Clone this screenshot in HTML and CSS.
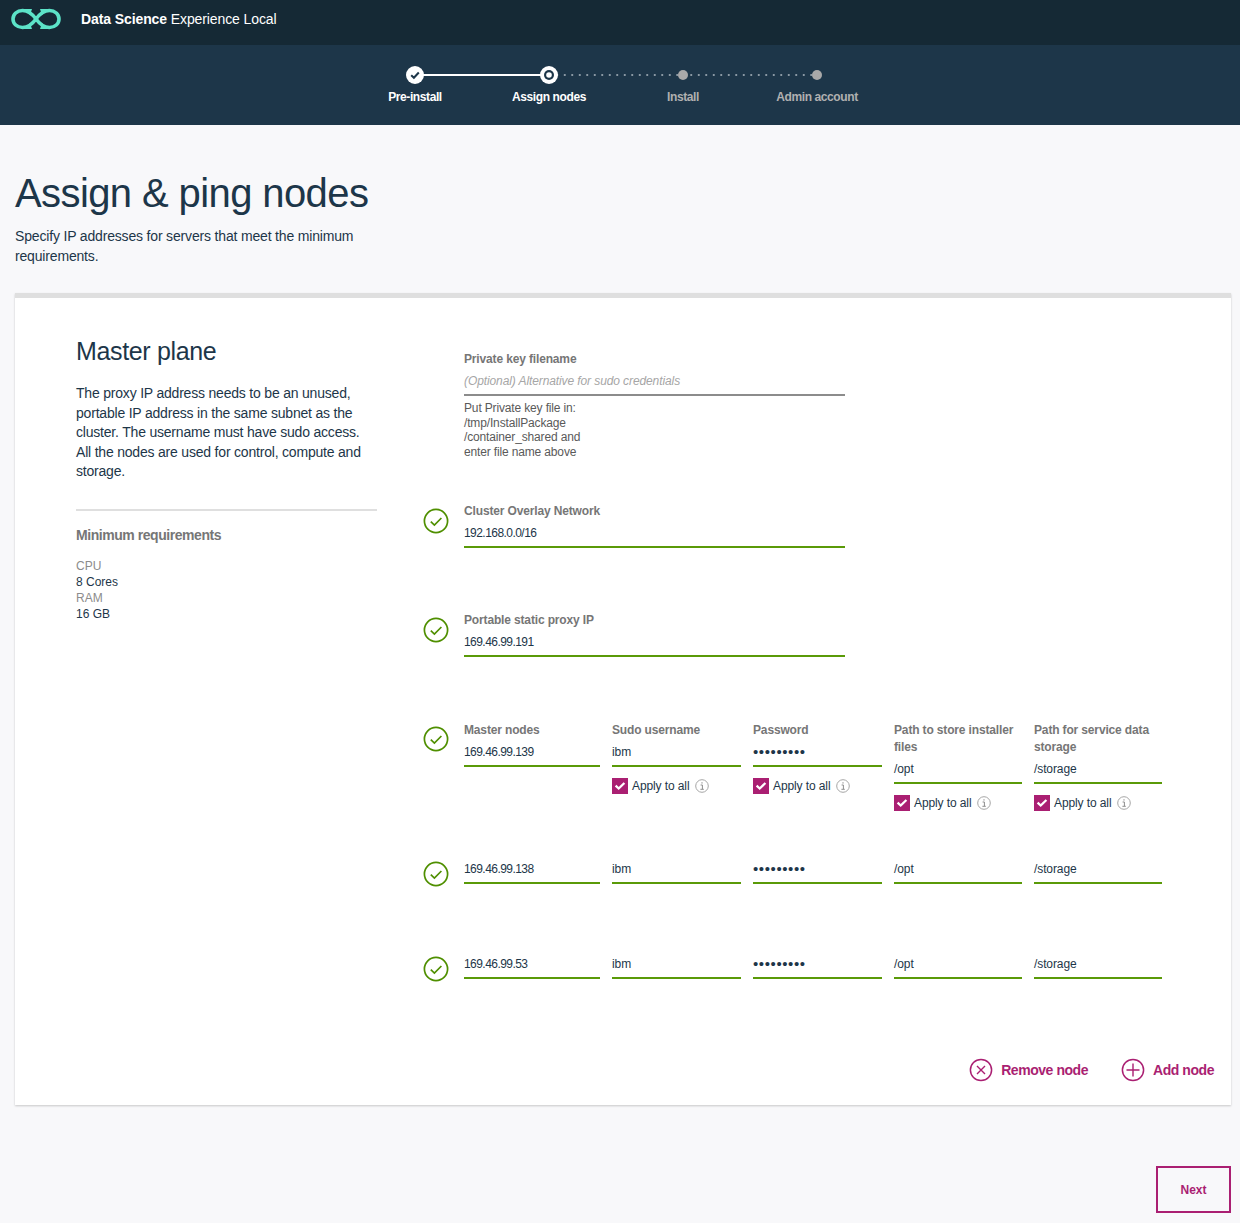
FILE: index.html
```html
<!DOCTYPE html>
<html lang="en">
<head>
  <meta charset="UTF-8">
  <title>Data Science Experience Local</title>
  <link rel="stylesheet" href="styles.css">
</head>
<body>
  <svg class="defs" width="0" height="0">
    <symbol id="ok" viewBox="0 0 26 26">
      <circle cx="13" cy="13" r="11.6" fill="none" stroke="#4f8f00" stroke-width="1.7"/>
      <path d="M7.8 13.6l3.6 3.4L18.400 10" fill="none" stroke="#4f8f00" stroke-width="1.7"/>
    </symbol>
    <symbol id="check" viewBox="0 0 16 16">
      <rect width="16" height="16" fill="#aa1f72"/>
      <path d="M3.600 7.600l3.100 2.900L12.400 5" fill="none" stroke="#fff" stroke-width="2.300"/>
    </symbol>
    <symbol id="info" viewBox="0 0 14 14">
      <circle cx="7" cy="7" r="6.300" fill="none" stroke="#a6a6a6"/>
      <path d="M5.600 6h1.800v4M5.400 10.300h3.400M7 3.200v1.400" fill="none" stroke="#8c8c8c"/>
    </symbol>
  </svg>

  <header class="topbar">
    <svg class="logo" width="50" height="22" viewBox="0 0 50 22">
      <path d="M25 11C21 5.500 17 2.500 11.500 2.500 6 2.500 2 6.300 2 11S6 19.500 11.500 19.500C17 19.500 21 16.500 25 11 29 5.500 33 2.500 38.500 2.500 44 2.500 48 6.300 48 11S44 19.500 38.500 19.500C33 19.500 29 16.500 25 11Z" fill="none" stroke="#5ce3c8" stroke-width="3.600"/>
      <path d="M13 1h8l-2 6zM37 1h-8l2 6zM13 21h8l-2-6zM37 21h-8l2-6z" fill="#5ce3c8"/>
    </svg>
    <div class="brand"><b>Data Science</b> Experience Local</div>
  </header>

  <nav class="stepper">
    <div class="step done">
      <span class="dot"><svg width="18" height="18" viewBox="0 0 18 18"><circle cx="9" cy="9" r="9" fill="#fff"/><path d="M5.200 9.200l2.700 2.600 4.900-5.300" fill="none" stroke="#1d3649" stroke-width="2"/></svg></span>
      <span class="step-name">Pre-install</span>
    </div>
    <div class="step current">
      <span class="dot"><svg width="18" height="18" viewBox="0 0 18 18"><circle cx="9" cy="9" r="9" fill="#fff"/><circle cx="9" cy="9" r="5" fill="#1d3649"/><circle cx="9" cy="9" r="2.800" fill="#fff"/></svg></span>
      <span class="step-name">Assign nodes</span>
    </div>
    <div class="step todo">
      <span class="dot"><i></i></span>
      <span class="step-name">Install</span>
    </div>
    <div class="step todo">
      <span class="dot"><i></i></span>
      <span class="step-name">Admin account</span>
    </div>
  </nav>

  <main class="content">
    <h1>Assign &amp; ping nodes</h1>
    <p class="intro">Specify IP addresses for servers that meet the minimum requirements.</p>

    <section class="card">
      <div class="card-body">
        <aside class="side">
          <h2>Master plane</h2>
          <p class="side-text">The proxy IP address needs to be an unused, portable IP address in the same subnet as the cluster. The username must have sudo access. All the nodes are used for control, compute and storage.</p>
          <h3>Minimum requirements</h3>
          <dl class="reqs">
            <dt>CPU</dt><dd>8 Cores</dd>
            <dt>RAM</dt><dd>16 GB</dd>
          </dl>
        </aside>

        <div class="form">
          <div class="row row-key">
            <span class="status"></span>
            <div class="field wide">
              <label>Private key filename</label>
              <div class="input empty"><em>(Optional) Alternative for sudo credentials</em></div>
              <p class="hint">Put Private key file in:<br>/tmp/InstallPackage<br>/container_shared and<br>enter file name above</p>
            </div>
          </div>

          <div class="row row-net">
            <svg class="status"><use href="#ok"/></svg>
            <div class="field wide">
              <label>Cluster Overlay Network</label>
              <div class="input ip">192.168.0.0/16</div>
            </div>
          </div>

          <div class="row row-net">
            <svg class="status"><use href="#ok"/></svg>
            <div class="field wide">
              <label>Portable static proxy IP</label>
              <div class="input ip">169.46.99.191</div>
            </div>
          </div>

          <div class="row row-master">
            <svg class="status"><use href="#ok"/></svg>
            <div class="nodes">
              <div class="field">
                <label>Master nodes</label>
                <div class="input ip">169.46.99.139</div>
              </div>
              <div class="field">
                <label>Sudo username</label>
                <div class="input">ibm</div>
                <div class="apply"><svg class="box"><use href="#check"/></svg>Apply to all<svg class="info"><use href="#info"/></svg></div>
              </div>
              <div class="field">
                <label>Password</label>
                <div class="input secret">•••••••••</div>
                <div class="apply"><svg class="box"><use href="#check"/></svg>Apply to all<svg class="info"><use href="#info"/></svg></div>
              </div>
              <div class="field">
                <label>Path to store installer files</label>
                <div class="input">/opt</div>
                <div class="apply"><svg class="box"><use href="#check"/></svg>Apply to all<svg class="info"><use href="#info"/></svg></div>
              </div>
              <div class="field">
                <label>Path for service data storage</label>
                <div class="input">/storage</div>
                <div class="apply"><svg class="box"><use href="#check"/></svg>Apply to all<svg class="info"><use href="#info"/></svg></div>
              </div>
            </div>
          </div>

          <div class="row row-node">
            <svg class="status"><use href="#ok"/></svg>
            <div class="nodes">
              <div class="input ip">169.46.99.138</div>
              <div class="input">ibm</div>
              <div class="input secret">•••••••••</div>
              <div class="input">/opt</div>
              <div class="input">/storage</div>
            </div>
          </div>

          <div class="row row-node">
            <svg class="status"><use href="#ok"/></svg>
            <div class="nodes">
              <div class="input ip">169.46.99.53</div>
              <div class="input">ibm</div>
              <div class="input secret">•••••••••</div>
              <div class="input">/opt</div>
              <div class="input">/storage</div>
            </div>
          </div>
        </div>
      </div>

      <div class="node-actions">
        <a class="action">
          <svg width="24" height="24" viewBox="0 0 24 24"><circle cx="12" cy="12" r="10.600" fill="none" stroke="#aa1f72" stroke-width="1.500"/><path d="M8 8l8 8M16 8l-8 8" fill="none" stroke="#aa1f72" stroke-width="1.400"/></svg>
          Remove node
        </a>
        <a class="action">
          <svg width="24" height="24" viewBox="0 0 24 24"><circle cx="12" cy="12" r="10.600" fill="none" stroke="#aa1f72" stroke-width="1.500"/><path d="M12 5.500v13M5.500 12h13" fill="none" stroke="#aa1f72" stroke-width="1.400"/></svg>
          Add node
        </a>
      </div>
    </section>

    <div class="footer">
      <button class="next">Next</button>
    </div>
  </main>
</body>
</html>
```

FILE: styles.css
```css
body {
  margin: 0;
  background-color: #f8f8fa;
  font-family: "Liberation Sans", Arial, sans-serif;
  color: #1d3649;
}
.defs {
  position: absolute;
}

.topbar {
  display: flex;
  align-items: center;
  height: 38px;
  padding: 0 0 7px 11px;
  background-color: #152935;
  color: #fff;
}
.logo {
  margin-right: 20px;
}
.brand {
  font-size: 14px;
  letter-spacing: -0.1px;
}

.stepper {
  display: flex;
  justify-content: center;
  height: 80px;
  padding-right: 8px;
  background-color: #1d3649;
}
.step {
  position: relative;
  display: flex;
  flex-direction: column;
  align-items: center;
  width: 134px;
  padding-top: 21px;
  box-sizing: border-box;
}
.dot {
  position: relative;
  z-index: 1;
  display: flex;
  align-items: center;
  justify-content: center;
  width: 18px;
  height: 18px;
}
.dot i {
  width: 10px;
  height: 10px;
  border-radius: 50%;
  background-color: #a9a9a9;
}
.step-name {
  margin-top: 5px;
  font-size: 12px;
  font-weight: bold;
  line-height: 16px;
  letter-spacing: -0.4px;
  color: #fff;
}
.todo .step-name {
  color: #b0b0b0;
}
/* connector to the next step */
.step::after {
  content: "";
  position: absolute;
  top: 29px;
  left: 50%;
  width: 100%;
}
.done::after {
  border-top: 2px solid #fff;
}
.current::after,
.todo:nth-child(3)::after {
  height: 2px;
  background-image: radial-gradient(circle, #8a98a3 0.8px, transparent 1px);
  background-size: 7.500px 2px;
  background-position: 4.500px 0;
}
.todo:last-child::after {
  display: none;
}

.content {
  padding: 0 9px 0 15px;
}
h1 {
  margin: 45px 0 0;
  font-size: 40px;
  font-weight: normal;
  line-height: 46px;
  letter-spacing: -0.6px;
}
.intro {
  width: 350px;
  margin: 11px 0 0;
  font-size: 14px;
  line-height: 19.500px;
  letter-spacing: -0.17px;
}

.card {
  margin-top: 27px;
  height: 807px;
  background-color: #fff;
  border-top: 5px solid #dfdfdf;
  box-shadow: 0 1px 2px rgba(0, 0, 0, 0.2);
}
.card-body {
  display: flex;
  height: 754px;
  padding-top: 1px;
}

.side {
  width: 301px;
  margin-left: 61px;
  margin-right: 46px;
}
h2 {
  margin: 37px 0 0;
  font-size: 25px;
  font-weight: normal;
  line-height: 30px;
  letter-spacing: -0.35px;
}
.side-text {
  margin: 18px 0 0;
  padding-bottom: 27px;
  border-bottom: 2px solid #dfdfdf;
  font-size: 14px;
  line-height: 19.500px;
  letter-spacing: -0.2px;
}
h3 {
  margin: 15px 0 0;
  font-size: 14px;
  line-height: 18px;
  letter-spacing: -0.45px;
  color: #767676;
}
.reqs {
  margin: 14px 0 0;
  font-size: 12px;
  line-height: 16px;
}
.reqs dt {
  color: #8c8c8c;
}
.reqs dd {
  margin: 0;
}

.form {
  flex: 1;
}
.row {
  display: flex;
  align-items: flex-start;
  gap: 15px;
}
.status {
  flex: none;
  width: 26px;
  height: 26px;
}
.row-key {
  height: 137px;
  padding-top: 52px;
}
.row-net {
  height: 94px;
  padding-top: 15px;
}
.row-net .status {
  margin-top: 5px;
}
.row-master {
  height: 124px;
  padding-top: 16px;
}
.row-master .status {
  margin-top: 4px;
}
.row-node {
  height: 83px;
  padding-top: 12px;
}
.row-node .status {
  margin-top: 3px;
}
.field.wide {
  width: 381px;
}
.nodes {
  display: grid;
  grid-template-columns: 136px 129px 129px 128px 128px;
  column-gap: 12px;
}
label {
  display: block;
  font-size: 12px;
  font-weight: bold;
  line-height: 17px;
  letter-spacing: -0.15px;
  color: #767676;
}
.input {
  height: 24px;
  margin-top: 2px;
  border-bottom: 2px solid #5a9a08;
  font-size: 12px;
  line-height: 22px;
  letter-spacing: -0.1px;
}
.nodes > .input {
  margin-top: 0;
}
.input.ip {
  letter-spacing: -0.55px;
}
.input.empty {
  border-bottom-color: #8c8c8c;
  color: #a6a6a6;
}
.input.secret {
  font-size: 15px;
  letter-spacing: 0.6px;
}
.hint {
  margin: 5px 0 0;
  font-size: 12px;
  line-height: 14.500px;
  letter-spacing: -0.15px;
  color: #5a5a5a;
}
.apply {
  display: flex;
  align-items: center;
  margin-top: 11px;
  font-size: 12px;
  line-height: 16px;
  letter-spacing: -0.1px;
}
.box {
  width: 16px;
  height: 16px;
  margin-right: 4px;
}
.info {
  width: 14px;
  height: 14px;
  margin-left: 5px;
}

.node-actions {
  display: flex;
  justify-content: flex-end;
  gap: 33px;
  padding-right: 17px;
  padding-top: 5px;
}
.action {
  display: flex;
  align-items: center;
  gap: 8px;
  font-size: 14px;
  font-weight: bold;
  letter-spacing: -0.45px;
  color: #aa1f72;
}

.footer {
  display: flex;
  justify-content: flex-end;
  margin-top: 61px;
}
.next {
  width: 75px;
  height: 47px;
  background: none;
  border: 2px solid #aa1f72;
  font-family: inherit;
  font-size: 12px;
  font-weight: bold;
  color: #aa1f72;
}
```
